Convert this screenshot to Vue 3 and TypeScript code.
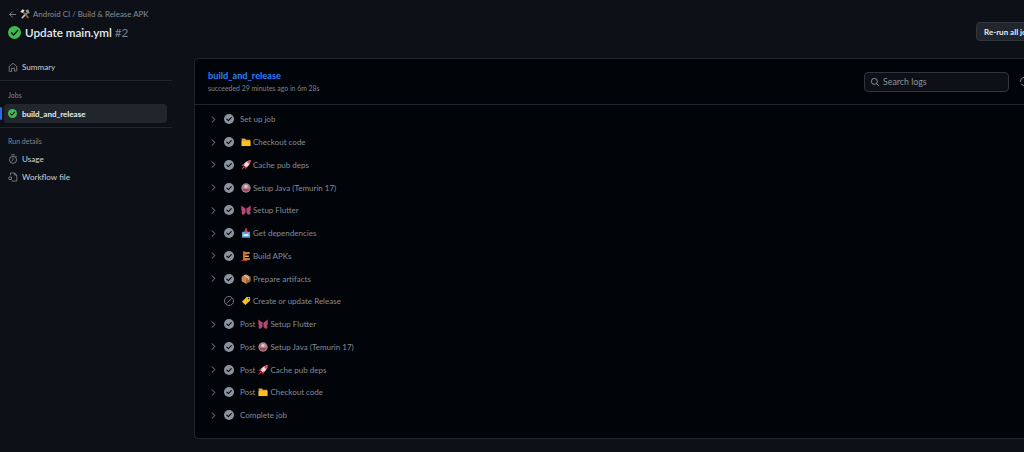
<script setup lang="ts">
type Emoji = 'folder' | 'rocket' | 'java' | 'butterfly' | 'package' | 'build' | 'box' | 'tag' | ''
interface Step { pre?: string; emoji: Emoji; label: string; skipped?: boolean }
const steps: Step[] = [
  { emoji: '', label: 'Set up job' },
  { emoji: 'folder', label: 'Checkout code' },
  { emoji: 'rocket', label: 'Cache pub deps' },
  { emoji: 'java', label: 'Setup Java (Temurin 17)' },
  { emoji: 'butterfly', label: 'Setup Flutter' },
  { emoji: 'package', label: 'Get dependencies' },
  { emoji: 'build', label: 'Build APKs' },
  { emoji: 'box', label: 'Prepare artifacts' },
  { emoji: 'tag', label: 'Create or update Release', skipped: true },
  { pre: 'Post', emoji: 'butterfly', label: 'Setup Flutter' },
  { pre: 'Post', emoji: 'java', label: 'Setup Java (Temurin 17)' },
  { pre: 'Post', emoji: 'rocket', label: 'Cache pub deps' },
  { pre: 'Post', emoji: 'folder', label: 'Checkout code' },
  { emoji: '', label: 'Complete job' },
]
</script>

<template>
  <div class="viewport">
    <div class="page">
      <header class="top">
        <div class="heading">
          <div class="crumb">
            <svg class="back" viewBox="0 0 16 16"><path d="M7.800 3.200 3 8l4.800 4.800M3.400 8H13.500" fill="none" stroke="currentColor" stroke-width="1.500" stroke-linecap="round" stroke-linejoin="round"/></svg>
            <svg class="tools" viewBox="0 0 16 16">
              <path d="M2 13.500 9.500 6l2 2-7.500 7.500z" fill="#b8bcc2"/>
              <path d="M8.500 2.500 13 .5l2.500 5.500-3.500 2z" fill="#8d949c"/>
              <path d="M12.500 15 3.500 5l2-1.500L14.500 13z" fill="#a0662f"/>
              <path d="M.5 4.500 4 .5l3.500 1.500-1.500 2-2 2.500z" fill="#d5d9de"/>
            </svg>
            <span>Android CI / Build &amp; Release APK</span>
          </div>
          <div class="title-row">
            <svg class="ok-big" viewBox="0 0 16 16"><circle cx="8" cy="8" r="8" fill="#3fb950"/><path d="M4.300 8.300 7 11l4.800-5.400" fill="none" stroke="#0d1117" stroke-width="1.700" stroke-linecap="round" stroke-linejoin="round"/></svg>
            <h1>Update main.yml <span>#2</span></h1>
          </div>
        </div>
        <button class="rerun" type="button">Re-run all jobs</button>
      </header>

      <div class="body">
        <aside class="side">
          <div class="nav-row">
            <svg class="ico" viewBox="0 0 16 16"><path d="M2 7 8 2l6 5v6.800a.7.7 0 0 1-.7.7H10.200V10H5.800v5.500H2.700a.7.7 0 0 1-.7-.7z" fill="none" stroke="currentColor" stroke-width="1.300" stroke-linejoin="round"/></svg>
            <span>Summary</span>
          </div>
          <div class="sep sep-a"></div>
          <div class="side-label">Jobs</div>
          <div class="job">
            <i class="marker"></i>
            <svg class="ok-small" viewBox="0 0 16 16"><circle cx="8" cy="8" r="8" fill="#3fb950"/><path d="M4.400 8.300 7 10.800l4.700-5.200" fill="none" stroke="#0d1117" stroke-width="1.800" stroke-linecap="round" stroke-linejoin="round"/></svg>
            <span>build_and_release</span>
          </div>
          <div class="sep sep-b"></div>
          <div class="side-label second">Run details</div>
          <div class="nav-row">
            <svg class="ico" viewBox="0 0 16 16"><circle cx="8" cy="9.300" r="5.700" fill="none" stroke="currentColor" stroke-width="1.300"/><path d="M6 1.200h4M8 6.500v3l-1.500 1.500M12.500 3.500l1 1" fill="none" stroke="currentColor" stroke-width="1.300" stroke-linecap="round"/></svg>
            <span>Usage</span>
          </div>
          <div class="nav-row">
            <svg class="ico" viewBox="0 0 16 16"><path d="M4 5.500V1.500h6.500L14 5v9.500H5.500M10.500 1.500V5H14M1.500 8h4v4h-4z" fill="none" stroke="currentColor" stroke-width="1.200" stroke-linejoin="round"/></svg>
            <span>Workflow file</span>
          </div>
        </aside>

        <section class="panel">
          <div class="panel-head">
            <div>
              <div class="job-name">build_and_release</div>
              <div class="job-meta">succeeded 29 minutes ago in 6m 28s</div>
            </div>
            <div class="tools-row">
              <div class="search">
                <svg viewBox="0 0 16 16"><circle cx="7" cy="7" r="4.800" fill="none" stroke="currentColor" stroke-width="1.500"/><path d="m10.600 10.600 3.600 3.600" fill="none" stroke="currentColor" stroke-width="1.500" stroke-linecap="round"/></svg>
                <span>Search logs</span>
              </div>
              <svg class="refresh" viewBox="0 0 16 16"><path d="M2 8a6 6 0 0 1 10.500-4L14 5.500M14 2v3.500h-3.500M14 8a6 6 0 0 1-10.500 4" fill="none" stroke="currentColor" stroke-width="1.400" stroke-linecap="round" stroke-linejoin="round"/></svg>
            </div>
          </div>

          <ul class="steps">
            <li v-for="(s, i) in steps" :key="i" class="step">
              <span class="chev">
                <svg v-if="!s.skipped" viewBox="0 0 16 16"><path d="m5.500 3 5 5-5 5" fill="none" stroke="currentColor" stroke-width="1.600" stroke-linecap="round" stroke-linejoin="round"/></svg>
              </span>
              <svg v-if="s.skipped" class="state" viewBox="0 0 16 16"><circle cx="8" cy="8" r="7.200" fill="none" stroke="#8b949e" stroke-width="1.300"/><path d="M4 12 12 4" stroke="#8b949e" stroke-width="1.300"/></svg>
              <svg v-else class="state" viewBox="0 0 16 16"><circle cx="8" cy="8" r="8" fill="#8b949e"/><path d="M4.500 8.300 7 10.700l4.600-5" fill="none" stroke="#010409" stroke-width="1.700" stroke-linecap="round" stroke-linejoin="round"/></svg>
              <span class="step-text">
                <span v-if="s.pre" class="pre">{{ s.pre }}</span>
                <svg v-if="s.emoji" class="emoji" viewBox="0 0 16 16">
                  <template v-if="s.emoji === 'folder'">
                    <path d="M1 2.500h5.500L8 4.500h7v10H1z" fill="#e0a23a"/>
                    <path d="M1 6.500h14V14.500H1z" fill="#fcc21b"/>
                  </template>
                  <template v-else-if="s.emoji === 'rocket'">
                    <path d="M15.500.5C10 1 6 4 3.500 8L8 12.500C12 10 15 6 15.500.5z" fill="#f0d7dc"/>
                    <path d="M15.500.5c-2.500.2-4.500 1-6.200 2.200l4 4C14.500 5 15.300 3 15.500.5z" fill="#e8475a"/>
                    <path d="M5 6 .5 8.500 3.500 9.500 6 8zM10 11 7.500 15.500 6.500 12.500 8 10z" fill="#d8344a"/>
                    <path d="M4 10 .5 15.500l5.500-3.500z" fill="#e8475a"/>
                  </template>
                  <template v-else-if="s.emoji === 'java'">
                    <circle cx="8" cy="8" r="7.500" fill="#a5808e"/>
                    <path d="M2 9.500h12a6.500 6.500 0 0 1-12 0z" fill="#9b4a5a"/>
                    <circle cx="8" cy="5.500" r="2.800" fill="#d8c6cc"/>
                  </template>
                  <template v-else-if="s.emoji === 'butterfly'">
                    <path d="M7.400 6 .5.800V9l1.800.7L.8 11l.6 4.200 3.800-.2L7.400 11z" fill="#c9445e"/>
                    <path d="M8.600 6 15.500.8V9l-1.800.7 1.500 1.300-.6 4.200-3.800-.2L8.600 11z" fill="#c9445e"/>
                    <path d="M2.200 4.500 5.800 7.500 2.200 8.500zM13.800 4.500 10.200 7.500 13.800 8.500zM3 11.500l2-.7.5 2-2 .6zM13 11.500l-2-.7-.5 2 2 .6z" fill="#5266c9"/>
                    <path d="M7.400 3.500h1.200v10H7.400z" fill="#4b3440"/>
                  </template>
                  <template v-else-if="s.emoji === 'package'">
                    <path d="M1.500 6h13V15.500H1.500z" fill="#5aa5dd"/>
                    <path d="M4 9.500h8v3.500H4z" fill="#d8e8f3"/>
                    <path d="M8 .5v5" stroke="#e0455a" stroke-width="2.600"/>
                    <path d="M4.500 4.500 8 8.500l3.500-4z" fill="#e0455a"/>
                  </template>
                  <template v-else-if="s.emoji === 'build'">
                    <path d="M3 .5h3.500v14H3z" fill="#c8692a"/>
                    <path d="M6 2h8v2.500H6zM6 7h6.500v2.500H6zM6 11.500h8V14H6z" fill="#e8b64d"/>
                    <path d="M6 4.500h3v2.500H6z" fill="#c8402f"/>
                    <path d="M1 14.500h9v1.500H1z" fill="#c8402f"/>
                  </template>
                  <template v-else-if="s.emoji === 'box'">
                    <path d="M8 .5 15 4.500v7L8 15.500 1 11.500v-7z" fill="#c9885a"/>
                    <path d="M8 8 15 4.500v7L8 15.500z" fill="#a5653a"/>
                    <path d="M4.500 2.500 11 6.400v3l1.500-.8v-3L6 1.700z" fill="#ecd3a8"/>
                  </template>
                  <template v-else-if="s.emoji === 'tag'">
                    <path d="M9 1.500h5.500V7L7 14.500 1.500 9z" fill="#fcc21b"/>
                    <circle cx="12" cy="4" r="1.100" fill="#0d1117"/>
                  </template>
                </svg>
                <span>{{ s.label }}</span>
              </span>
            </li>
          </ul>
        </section>
      </div>
    </div>
  </div>
</template>

<style>
html, body { margin: 0; background: #0d1117; }
</style>

<style scoped>
.viewport {
  width: 1024px;
  height: 452px;
  overflow: hidden;
  background: #0d1117;
  font-family: "Lato", "Open Sans", sans-serif;
  color: #e6edf3;
}
.page { width: 1080px; height: 452px; display: flex; flex-direction: column; }
.top {
  height: 58px;
  display: flex;
  justify-content: space-between;
  align-items: flex-start;
  padding: 9px 0 0 8px;
  box-sizing: border-box;
  flex: none;
}
.crumb { display: flex; align-items: center; color: #848d97; font-size: 7.9px; height: 10px; }
.back { width: 9px; height: 9px; margin-right: 3px; }
.tools { width: 10px; height: 10px; margin-right: 3px; }
.title-row { display: flex; align-items: center; margin-top: 6px; height: 14px; }
.ok-big { width: 13px; height: 13px; margin-right: 4px; }
h1 { margin: 0; font-size: 11.7px; font-weight: 600; color: #e6edf3; white-space: nowrap; }
h1 span { font-weight: 400; color: #7d8590; }
.rerun {
  margin: 13px 0 0;
  width: 104px;
  height: 19px;
  padding: 0 7px;
  text-align: left;
  background: #21262d;
  border: 1px solid #30363d;
  border-radius: 4px;
  color: #e6edf3;
  font: 700 8px "Lato", sans-serif;
}
.body { display: flex; flex: none; height: 381px; }
.side { width: 172px; flex: none; margin-right: 22px; }
.nav-row {
  display: flex;
  align-items: center;
  height: 18px;
  padding-left: 8px;
  font-size: 8.1px;
  color: #c9d1d9;
}
.ico { width: 10px; height: 10px; margin-right: 4px; color: #8b949e; }
.sep { height: 1px; background: #21262d; }
.sep-a { margin-top: 4px; }
.sep-b { margin-top: 4px; }
.side-label { font-size: 7px; color: #7d8590; padding-left: 8px; margin-top: 9px; height: 14px; line-height: 10px; }
.side-label.second { margin-top: 8px; height: 14px; }
.job {
  position: relative;
  display: flex;
  align-items: center;
  height: 19px;
  margin: 0 5px 0 4px;
  padding-left: 4px;
  background: #21262d;
  border-radius: 4px;
  font-size: 8px;
  font-weight: 700;
  color: #e6edf3;
}
.marker {
  position: absolute;
  left: -4px;
  top: 3px;
  width: 2px;
  height: 13px;
  background: #1f6feb;
  border-radius: 1px;
}
.ok-small { width: 9px; height: 9px; margin-right: 5px; }
.panel {
  width: 900px;
  height: 381px;
  flex: none;
  box-sizing: border-box;
  background: #010409;
  border: 1px solid #21262d;
  border-radius: 4px;
}
.panel-head {
  height: 46px;
  box-sizing: border-box;
  border-bottom: 1px solid #21262d;
  display: flex;
  align-items: center;
  justify-content: space-between;
  padding: 0 0 0 13px;
}
.job-name { font-size: 9.2px; font-weight: 700; color: #2f81f7; line-height: 13px; }
.job-meta { font-size: 6.9px; color: #7d8590; line-height: 11px; margin-top: 1px; }
.tools-row { display: flex; align-items: center; width: 229px; flex: none; }
.search {
  width: 145px;
  height: 20px;
  box-sizing: border-box;
  margin-right: 10px;
  border: 1px solid #30363d;
  border-radius: 4px;
  background: #0d1117;
  display: flex;
  align-items: center;
  padding-left: 5px;
  color: #8b949e;
  font-size: 8.8px;
}
.search svg { width: 10px; height: 10px; margin-right: 3px; }
.refresh { width: 11px; height: 11px; color: #8b949e; }
.steps { list-style: none; margin: 0; padding: 3px 0 0; }
.step {
  display: flex;
  align-items: center;
  height: 22.75px;
  padding-left: 14px;
  color: #848d97;
  font-size: 8px;
}
.chev { width: 9px; height: 9px; margin-right: 6px; color: #8b949e; flex: none; display: block; }
.chev svg { width: 9px; height: 9px; display: block; }
.state { width: 10px; height: 10px; margin-right: 6px; flex: none; }
.step-text { display: flex; align-items: center; white-space: nowrap; }
.pre { margin-right: 2px; }
.emoji { width: 10px; height: 10px; margin: 0 2px 0 1px; flex: none; }
</style>
